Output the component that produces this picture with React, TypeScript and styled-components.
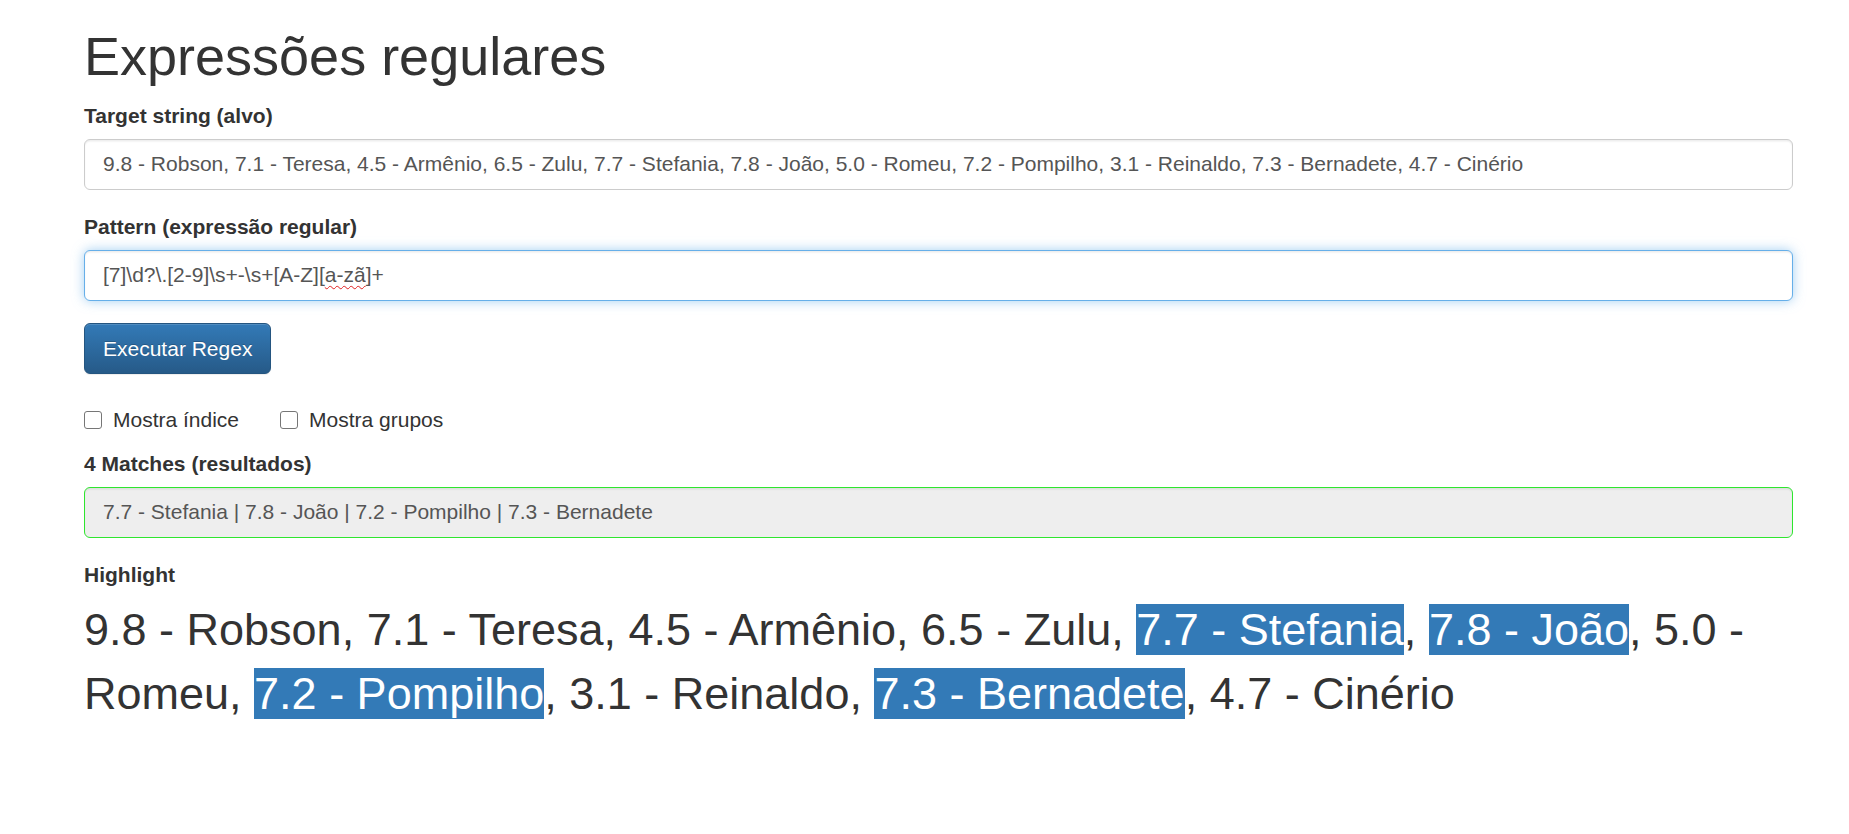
import React from "react";
import styled, { createGlobalStyle } from "styled-components";

const GlobalStyle = createGlobalStyle`
  html, body {
    margin: 0;
    padding: 0;
    background: #fff;
  }
  body {
    font-family: "Liberation Sans", Arial, Helvetica, sans-serif;
    font-size: 21px;
    line-height: 1.42857;
    color: #333;
  }
  * { box-sizing: border-box; }
`;

const Page = styled.div`
  padding: 0 56px 40px 84px;
`;

const Title = styled.h1`
  font-family: "Liberation Sans", Arial, sans-serif;
  font-weight: 500;
  font-size: 54px;
  line-height: 1.1;
  margin: 27px 0 15px;
  color: #333;
`;

const FormGroup = styled.div<{ $mb?: number }>`
  margin-bottom: ${(p) => (p.$mb ?? 22.5)}px;
`;

const Label = styled.label`
  display: inline-block;
  max-width: 100%;
  margin-bottom: 7.5px;
  font-weight: 700;
  font-size: 21px;
  line-height: 30px;
  color: #333;
`;

const TextInput = styled.input<{ $variant?: "plain" | "result" }>`
  display: block;
  width: 100%;
  height: 51px;
  padding: 9px 18px;
  font-family: "Liberation Sans", Arial, sans-serif;
  font-size: 21px;
  line-height: 30px;
  color: #555;
  background: ${(p) => (p.$variant === "result" ? "#eeeeee" : "#fff")};
  border: 1px solid ${(p) => (p.$variant === "result" ? "#2ee62e" : "#ccc")};
  border-radius: 6px;
  box-shadow: inset 0 1.5px 1.5px rgba(0, 0, 0, 0.075);
  outline: none;
`;

const FocusedField = styled.div`
  display: flex;
  align-items: center;
  width: 100%;
  height: 51px;
  padding: 9px 18px;
  font-size: 21px;
  line-height: 30px;
  color: #555;
  background: #fff;
  border: 1px solid #66afe9;
  border-radius: 6px;
  box-shadow: inset 0 1.5px 1.5px rgba(0, 0, 0, 0.075),
    0 0 12px rgba(102, 175, 233, 0.6);
  white-space: pre;
`;

const Misspelled = styled.span`
  text-decoration: underline wavy #e02020;
  text-decoration-thickness: 1px;
  text-underline-offset: 3px;
`;

const PrimaryButton = styled.button`
  display: inline-block;
  height: 51px;
  padding: 9px 18px;
  font-family: "Liberation Sans", Arial, sans-serif;
  font-size: 21px;
  line-height: 30px;
  color: #fff;
  background-image: linear-gradient(to bottom, #337ab7 0, #265a88 100%);
  border: 1px solid #245580;
  border-radius: 6px;
  text-shadow: 0 -1px 0 rgba(0, 0, 0, 0.2);
  box-shadow: inset 0 1px 0 rgba(255, 255, 255, 0.15), 0 1px 1px rgba(0, 0, 0, 0.075);
  cursor: pointer;
`;

const CheckRow = styled.div`
  display: flex;
  align-items: center;
  gap: 41px;
  margin: 31px 0 14px;
`;

const CheckLabel = styled.label`
  display: inline-flex;
  align-items: center;
  gap: 11px;
  font-size: 21px;
  line-height: 30px;
  color: #333;
  cursor: pointer;
`;

const CheckBox = styled.input`
  appearance: none;
  -webkit-appearance: none;
  width: 18px;
  height: 18px;
  margin: 0;
  border: 1px solid #767676;
  border-radius: 3px;
  background: #fff;
`;

const HighlightText = styled.p`
  margin: 0;
  font-size: 45px;
  line-height: 64.3px;
  color: #333;
`;

const Mark = styled.span`
  background: #337ab7;
  color: #fff;
`;

const target =
  "9.8 - Robson, 7.1 - Teresa, 4.5 - Armênio, 6.5 - Zulu, 7.7 - Stefania, 7.8 - João, 5.0 - Romeu, 7.2 - Pompilho, 3.1 - Reinaldo, 7.3 - Bernadete, 4.7 - Cinério";

const regex = /[7]\d?\.[2-9]\s+-\s+[A-Z][a-zã]+/g;

function buildParts(text: string) {
  const parts: { text: string; hit: boolean }[] = [];
  let last = 0;
  let m: RegExpExecArray | null;
  regex.lastIndex = 0;
  while ((m = regex.exec(text)) !== null) {
    if (m.index > last) parts.push({ text: text.slice(last, m.index), hit: false });
    parts.push({ text: m[0], hit: true });
    last = m.index + m[0].length;
  }
  if (last < text.length) parts.push({ text: text.slice(last), hit: false });
  return parts;
}

export default function App() {
  const parts = buildParts(target);
  const matches = parts.filter((p) => p.hit).map((p) => p.text);

  return (
    <Page>
      <GlobalStyle />
      <Title>Expressões regulares</Title>

      <FormGroup>
        <Label htmlFor="target">Target string (alvo)</Label>
        <TextInput id="target" readOnly defaultValue={target} />
      </FormGroup>

      <FormGroup>
        <Label>Pattern (expressão regular)</Label>
        <FocusedField role="textbox">
          {"[7]\\d?\\.[2-9]\\s+-\\s+[A-Z]["}
          <Misspelled>a-zã</Misspelled>
          {"]+"}
        </FocusedField>
      </FormGroup>

      <PrimaryButton type="button">Executar Regex</PrimaryButton>

      <CheckRow>
        <CheckLabel>
          <CheckBox type="checkbox" />
          Mostra índice
        </CheckLabel>
        <CheckLabel>
          <CheckBox type="checkbox" />
          Mostra grupos
        </CheckLabel>
      </CheckRow>

      <FormGroup>
        <Label htmlFor="result">{matches.length} Matches (resultados)</Label>
        <TextInput
          id="result"
          $variant="result"
          readOnly
          defaultValue={matches.join(" | ")}
        />
      </FormGroup>

      <Label>Highlight</Label>
      <HighlightText>
        {parts.map((p, i) => (p.hit ? <Mark key={i}>{p.text}</Mark> : <React.Fragment key={i}>{p.text}</React.Fragment>))}
      </HighlightText>
    </Page>
  );
}
